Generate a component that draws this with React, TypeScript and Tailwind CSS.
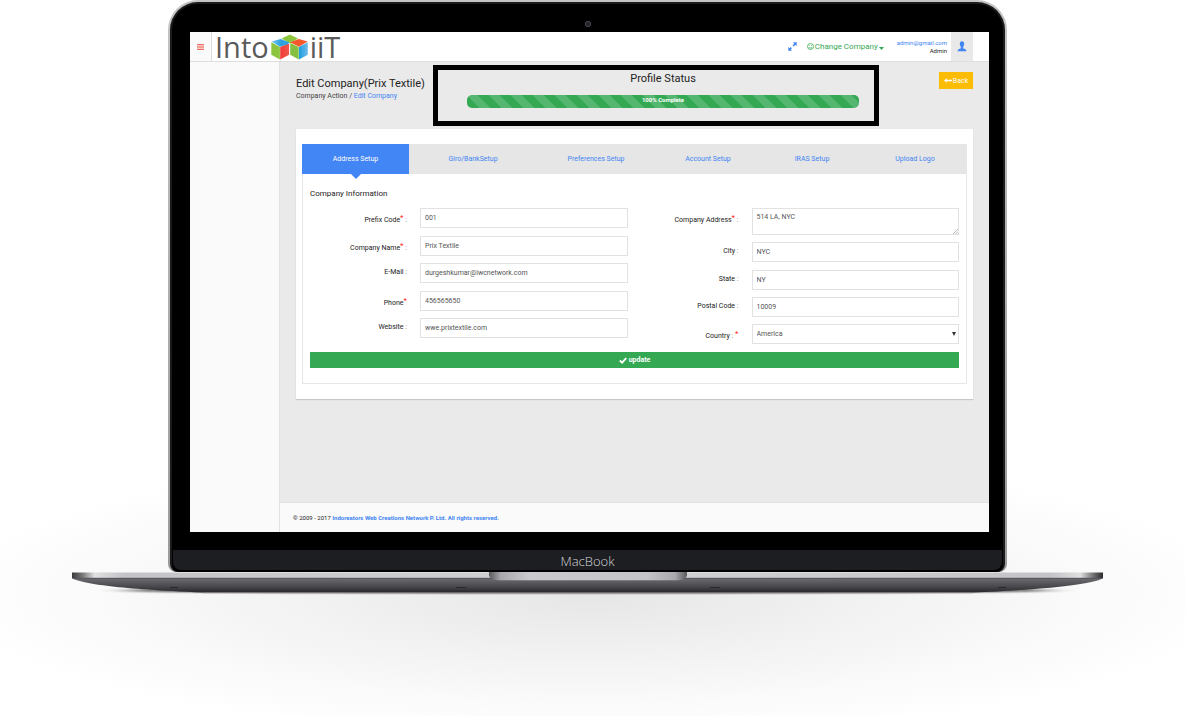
import type { ReactNode } from "react";

type FieldProps = {
  id: string;
  label: string;
  required?: boolean;
  top?: boolean;
  mark?: ReactNode;
  children: ReactNode;
};

const controlClass =
  "block h-5 w-full rounded-none border border-[#e2e2e2] bg-white px-1 text-[7px] leading-[10px] text-[#555] outline-none focus:border-[#4285f4]";

const Star = () => <span className="relative -top-[2px] text-[8px] text-[#ff1a1a]">*</span>;
const Colon = () => <span className="text-[#777]"> :</span>;

function Field({ id, label, required, top, mark, children }: FieldProps) {
  return (
    <div className={"flex gap-[13px] " + (top ? "items-start" : "items-center")}>
      <label
        htmlFor={id}
        className={
          "w-[97px] flex-none whitespace-pre text-right text-[7px] leading-[10px] text-[#222] " +
          (top ? "pt-[7px]" : required ? "pt-1" : "pb-[2px]")
        }
      >
        {label}
        {mark ?? (
          <>
            {required && <Star />}
            <Colon />
          </>
        )}
      </label>
      <div className="relative min-w-0 flex-1">{children}</div>
    </div>
  );
}

function Cubes() {
  return (
    <svg viewBox="0 0 37 26" className="h-[26px] w-[37px]" aria-hidden="true">
      <defs>
        <linearGradient id="cubeBlue" x1="0" x2="1">
          <stop offset="0" stopColor="#1e9be0" />
          <stop offset="1" stopColor="#6dbdea" />
        </linearGradient>
        <linearGradient id="cubeRed" x1="0" x2="1">
          <stop offset="0" stopColor="#ee3a36" />
          <stop offset="1" stopColor="#f2564c" />
        </linearGradient>
        <linearGradient id="cubeTop" x1="0" x2="1">
          <stop offset="0" stopColor="#7cc4ec" />
          <stop offset=".5" stopColor="#2ea3e0" />
          <stop offset="1" stopColor="#2ea3e0" />
        </linearGradient>
      </defs>
      <path d="M10.500 4.600 18.800.6l8.200 4-8.200 4.600z" fill="#8cc63f" />
      <path d="M.5 7.600 9.600 5l8.600 3.300-1.200 2.500-8 2z" fill="url(#cubeTop)" />
      <path d="M.3 8.200 8.900 13v12.500L.3 20.800z" fill="#8bc540" />
      <path d="M9.200 13l8.900-3.200v11L9.200 25.500z" fill="url(#cubeRed)" />
      <path d="M19 8.300 27.800 5l8.900 2.600L28 12.800z" fill="#f4592b" />
      <path d="M19.200 9 27.700 13v12.500l-8.500-4.700z" fill="#84bf41" />
      <path d="M28 13l8.800-4.800v12.600L28 25.500z" fill="url(#cubeBlue)" />
    </svg>
  );
}

function Header() {
  return (
    <header className="flex h-[30px] flex-none border-b border-[#dedede] bg-white">
      <button aria-label="Toggle menu" className="flex w-[21px] flex-none items-center justify-center bg-[#fafafa]">
        <svg viewBox="0 0 7 6" className="h-[6px] w-[7px]">
          <path d="M0 .8h7M0 3h7M0 5.200h7" stroke="#ea4335" strokeWidth="1.100" />
        </svg>
      </button>
      <a
        href="#home"
        aria-label="Into iiT"
        className="flex items-center border-l border-[#dedede] pl-[3px] font-['Open_Sans','Noto_Sans',sans-serif] text-[29px] leading-[30px] text-[#5a5a5a]"
      >
        <span>Into</span>
        <span className="mx-[2px]">
          <Cubes />
        </span>
        <span>iiT</span>
      </a>
      <div className="ml-auto flex items-center">
        <button aria-label="Full screen" className="mr-[10px]">
          <svg viewBox="0 0 9 9" className="h-[9px] w-[9px]" fill="#4285f4">
            <path d="M5 .3h3.700V4L7.500 2.800 5.700 4.600l-1.200-1.200L6.300 1.500zM4 8.700H.3V5l1.200 1.200 1.200-1.100 1.200 1.200-1.100 1.200z" />
          </svg>
        </button>
        <button className="mr-[13px] flex items-center gap-px text-[8px] leading-[10px] text-[#34a853]">
          <svg viewBox="0 0 8 8" className="h-[7px] w-[7px]" fill="none" stroke="#34a853" strokeWidth=".9">
            <circle cx="4" cy="4" r="3.400" />
            <path d="M2.200 4.600c.6 1.600 3 1.600 3.600 0M2.800 2.500v.9M5.200 2.500v.9" />
          </svg>
          Change Company
          <svg viewBox="0 0 5 3" className="mt-1 h-[3px] w-[5px]" fill="#34a853">
            <path d="M0 0h5L2.500 3z" />
          </svg>
        </button>
        <div className="mr-1 text-right">
          <a href="#profile" className="block text-[6px] leading-[8px] text-[#4285f4]">
            admin@gmail.com
          </a>
          <span className="block text-[6px] leading-[7px] text-[#222]">Admin</span>
        </div>
        <button aria-label="Account" className="mr-4 flex h-[29px] w-[22px] items-center justify-center bg-[#e9e9e9]">
          <svg viewBox="0 0 10 11" className="h-[11px] w-[10px]" fill="#4285f4">
            <path d="M5 .3c1.500 0 2.200 1.100 2.200 2.500S6.600 5.200 6.200 5.700v1.800c1.600.3 3 .8 3.300 2.700H.5c.3-1.900 1.700-2.400 3.300-2.700V5.700C3.400 5.200 2.800 4.200 2.800 2.800S3.500.3 5 .3z" />
          </svg>
        </button>
      </div>
    </header>
  );
}

function TitleRow() {
  return (
    <div className="flex h-[67px] items-start">
      <div className="w-[137px] flex-none whitespace-nowrap pt-[15px]">
        <h1 className="text-[11px] leading-[14px] text-[#222]">Edit Company(Prix Textile)</h1>
        <nav aria-label="Breadcrumb" className="text-[7px] leading-[10px] text-[#444]">
          Company Action /{" "}
          <a href="#edit" className="text-[#4285f4]">
            Edit Company
          </a>
        </nav>
      </div>
      <section className="mt-[3px] mr-[60px] h-[61px] flex-1 border-[5px] border-black pr-[15px] pl-[29px]">
        <h2 className="pt-px text-center text-[11px] leading-4 text-[#222]">Profile Status</h2>
        <div
          role="progressbar"
          aria-valuenow={100}
          aria-label="Profile status"
          className="mt-2 h-[13px] rounded-[5px] bg-[#34a853] bg-[linear-gradient(45deg,rgba(255,255,255,0.16)_25%,transparent_25%,transparent_50%,rgba(255,255,255,0.16)_50%,rgba(255,255,255,0.16)_75%,transparent_75%)] bg-[length:22px_22px] text-center text-[6px] leading-[10px] font-bold text-white"
        >
          100% Complete
        </div>
      </section>
      <button className="mt-[10px] flex h-[17px] w-[34px] items-center justify-center gap-px bg-[#fbbc05] text-[7px] leading-[10px] text-white">
        <svg viewBox="0 0 8 5" className="h-[5px] w-[8px]" fill="#fff">
          <path d="M0 2.500 2.800.2v1.600H8v1.400H2.800v1.600z" />
        </svg>
        Back
      </button>
    </div>
  );
}

const tabs = ["Address Setup", "Giro/BankSetup", "Preferences Setup", "Account Setup", "IRAS Setup", "Upload Logo"];

function Tabs() {
  return (
    <div role="tablist" className="grid h-[30px] grid-cols-[107fr_128fr_118fr_106fr_102fr_104fr] bg-[#e6e6e6]">
      {tabs.map((t, i) => (
        <button
          key={t}
          role="tab"
          aria-selected={i === 0}
          className={
            "relative text-[7px] leading-[10px] " + (i === 0 ? "bg-[#4285f4] text-white" : "text-[#4285f4]")
          }
        >
          {t}
          {i === 0 && (
            <svg viewBox="0 0 10 5" className="absolute top-full left-1/2 h-[5px] w-[10px] -translate-x-1/2" fill="#4285f4">
              <path d="M0 0h10L5 5z" />
            </svg>
          )}
        </button>
      ))}
    </div>
  );
}

function CompanyForm() {
  return (
    <form className="border border-t-0 border-[#e6e6e6] px-[7px] pt-[14px] pb-[15px]" onSubmit={(e) => e.preventDefault()}>
      <h3 className="text-[8px] leading-3 text-[#222]">Company Information</h3>
      <div className="mt-2 grid grid-cols-2 gap-[14px]">
        <div className="flex h-[130px] flex-col justify-between">
          <Field id="prefix" label="Prefix Code" required>
            <input id="prefix" className={controlClass} defaultValue="001" />
          </Field>
          <Field id="name" label="Company Name" required>
            <input id="name" className={controlClass} defaultValue="Prix Textile" />
          </Field>
          <Field id="email" label="E-Mail">
            <input id="email" className={controlClass} defaultValue="durgeshkumar@iwcnetwork.com" />
          </Field>
          <Field id="phone" label="Phone" required mark={<Star />}>
            <input id="phone" className={controlClass} defaultValue="456565650" />
          </Field>
          <Field id="website" label="Website">
            <input id="website" className={controlClass} defaultValue="wwe.prixtextile.com" />
          </Field>
        </div>
        <div className="flex h-[136px] flex-col justify-between">
          <Field id="address" label="Company Address" required top>
            <textarea
              id="address"
              className="block h-[27px] w-full resize-none border border-[#e2e2e2] px-1 py-[3px] text-[7px] leading-[10px] text-[#555] outline-none focus:border-[#4285f4]"
              defaultValue="514 LA, NYC"
            />
            <svg viewBox="0 0 5 5" className="pointer-events-none absolute right-px bottom-px h-[5px] w-[5px]">
              <path d="M0 5 5 0M2.500 5 5 2.500" stroke="#999" strokeWidth=".7" />
            </svg>
          </Field>
          <Field id="city" label="City">
            <input id="city" className={controlClass} defaultValue="NYC" />
          </Field>
          <Field id="state" label="State">
            <input id="state" className={controlClass} defaultValue="NY" />
          </Field>
          <Field id="postal" label="Postal Code">
            <input id="postal" className={controlClass} defaultValue="10009" />
          </Field>
          <Field
            id="country"
            label="Country"
            required
            mark={
              <>
                <Colon /> <Star />
              </>
            }
          >
            <select id="country" className={controlClass + " appearance-none"} defaultValue="America">
              <option>America</option>
            </select>
            <svg viewBox="0 0 4 4" className="pointer-events-none absolute top-2 right-[3px] h-1 w-1" fill="#333">
              <path d="M0 0h4L2 4z" />
            </svg>
          </Field>
        </div>
      </div>
      <button
        type="submit"
        className="mt-2 flex h-4 w-full items-center justify-center gap-[2px] bg-[#34a853] text-[7px] leading-[10px] font-bold text-white"
      >
        <svg viewBox="0 0 8 7" className="h-[7px] w-[8px]" fill="none" stroke="#fff" strokeWidth="1.900">
          <path d="M.8 3.500 3.100 5.600 7.200 1.200" />
        </svg>
        update
      </button>
    </form>
  );
}

function Screen() {
  return (
    <div className="flex h-[500px] flex-col bg-[#fafafa]">
      <Header />
      <div className="flex min-h-0 flex-1">
        <aside className="w-[90px] flex-none border-r border-[#e2e2e2] bg-[#fafafa]" />
        <div className="flex min-w-0 flex-1 flex-col">
          <main className="flex-1 bg-[#eaeaea] px-4">
            <TitleRow />
            <div className="bg-white px-[6px] py-[15px] shadow-[0_1px_1px_rgba(0,0,0,0.15)]">
              <Tabs />
              <CompanyForm />
            </div>
          </main>
          <footer className="flex h-[30px] flex-none items-center border-t border-[#e2e2e2] bg-[#fafafa] pl-[13px] text-[6px] leading-[8px] text-[#222]">
            <p>
              © 2009 - 2017{" "}
              <a href="#company" className="font-bold text-[#4285f4]">
                Indoreators Web Creations Network P. Ltd. All rights reserved.
              </a>
            </p>
          </footer>
        </div>
      </div>
    </div>
  );
}

function LaptopBase() {
  return (
    <svg viewBox="0 0 1031 24" preserveAspectRatio="none" className="block h-6 w-full overflow-visible" aria-hidden="true">
      <defs>
        <linearGradient id="deck" x1="0" x2="1">
          <stop offset="0" stopColor="#3a3a3c" />
          <stop offset=".01" stopColor="#77777a" />
          <stop offset=".022" stopColor="#e0e0e2" />
          <stop offset=".05" stopColor="#c4c3c7" />
          <stop offset=".5" stopColor="#d2d1d5" />
          <stop offset=".95" stopColor="#c4c3c7" />
          <stop offset=".978" stopColor="#e0e0e2" />
          <stop offset=".99" stopColor="#77777a" />
          <stop offset="1" stopColor="#2a2a2c" />
        </linearGradient>
        <linearGradient id="belly" x1="0" x2="0" y1="0" y2="1">
          <stop offset="0" stopColor="#727176" />
          <stop offset=".6" stopColor="#4a494e" />
          <stop offset="1" stopColor="#28272a" />
        </linearGradient>
        <linearGradient id="notch" x1="0" x2="1">
          <stop offset="0" stopColor="#5a595d" />
          <stop offset=".06" stopColor="#a9a8ac" />
          <stop offset=".2" stopColor="#cac9ce" />
          <stop offset=".8" stopColor="#c4c3c8" />
          <stop offset=".94" stopColor="#a9a8ac" />
          <stop offset="1" stopColor="#5a595d" />
        </linearGradient>
        <filter id="soft" x="-10%" y="-200%" width="120%" height="500%">
          <feGaussianBlur stdDeviation="14 1.200" />
        </filter>
      </defs>
      <ellipse cx="515" cy="18.500" rx="465" ry="2.500" fill="#111" opacity=".9" filter="url(#soft)" />
      <path d="M0 5h1031v1.500C1018 12 985 17 900 20.500H131C46 17 13 12 0 6.500z" fill="url(#belly)" />
      <path d="M0 .5h1031V6H0z" fill="url(#deck)" />
      <path d="M1 6.300h1029" stroke="#55545a" strokeWidth="1" />
      <path d="M417 0h198v3c0 3-4 5.300-12 5.300H429c-8 0-12-2.300-12-5.300z" fill="url(#notch)" />
      <path d="M98 15.500h8M384 15.500h10M638 15.500h10M926 15.500h8" stroke="#28272b" strokeWidth="1" />
      <path d="M131 20.800h769" stroke="#8b8589" strokeWidth=".8" />
    </svg>
  );
}

export default function App() {
  return (
    <div className="min-h-screen bg-white bg-[radial-gradient(ellipse_55%_20%_at_50%_83%,#e6e6e6_0%,#f1f1f1_40%,#fafafa_75%,#ffffff_100%)] pr-[82px] pl-[72px] font-[Roboto,'Liberation_Sans',sans-serif]">
      <div className="mx-24 rounded-t-[30px] rounded-b-[8px] bg-[linear-gradient(#c4c4c4,#9a9a9a)] p-[2px] pb-0">
        <div className="rounded-t-[28px] rounded-b-[8px] border-2 border-b-0 border-[#1b1b1b] bg-black">
          <div className="flex h-7 items-center justify-center pt-3">
            <span className="h-[6px] w-[6px] rounded-full border border-[#55565c] bg-[#1c1d24]" />
          </div>
          <div className="pr-[14px] pl-[18px]">
            <Screen />
          </div>
          <div className="px-px pt-[18px] pb-[2px]">
            <div className="flex h-5 items-center justify-center rounded-b-[8px] bg-[#1d1e22] pt-px font-['Open_Sans','Noto_Sans',sans-serif] text-[13px] leading-5 font-light text-[#d4d4d6]">
              MacBook
            </div>
          </div>
        </div>
      </div>
      <LaptopBase />
    </div>
  );
}
